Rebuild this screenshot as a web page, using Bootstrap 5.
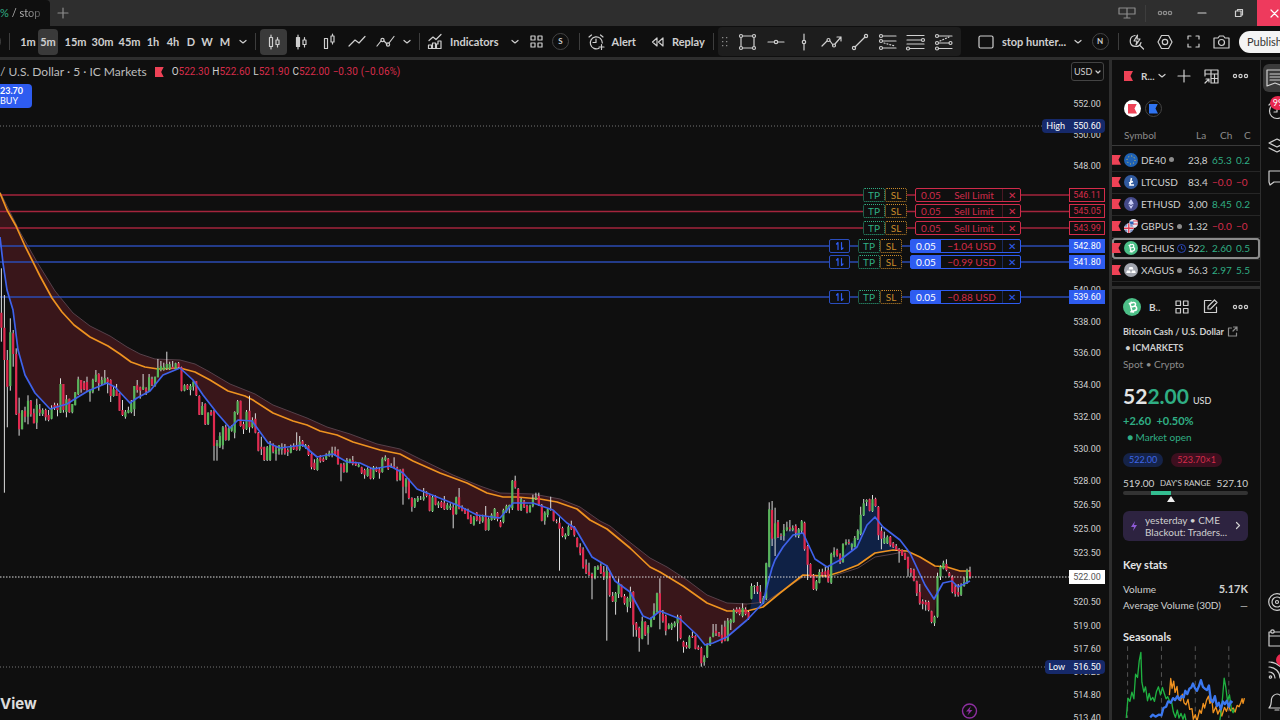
<!DOCTYPE html>
<html lang="en" data-bs-theme="dark">
<head>
<meta charset="utf-8">
<meta name="viewport" content="width=device-width, initial-scale=1">
<title>BCHUSD chart</title>
<link href="https://cdn.jsdelivr.net/npm/bootstrap@5.3.0/dist/css/bootstrap.min.css" rel="stylesheet">
<style>
:root{--bg:#0f0f0f;--line:#2e2e2e;--txt:#cfcfcf;--up:#2fae84;--down:#d62c4a;--blue:#2e5cf0;--gold:#c98a2b}
body{background:var(--bg);color:var(--txt);font:11px/16px Lato,"Noto Sans",sans-serif;overflow:hidden}
button,select{font:inherit;color:inherit;background:none;border:0;padding:0}
svg{display:block;overflow:visible}
.ico{fill:none;stroke:currentColor;stroke-width:1.2;stroke-linecap:round;stroke-linejoin:round}
.up{color:var(--up)}.down{color:var(--down)}.dim{color:#8c8c8c}
.titlebar{height:26px;background:#2e2e2e}
.tabitem{width:50px;background:var(--bg);white-space:nowrap;overflow:hidden;border-radius:0 4px 0 0}
.fade-text{background:linear-gradient(90deg,#bbb 40%,#555);-webkit-background-clip:text;background-clip:text;color:transparent}
.win{width:37px}.win-close{width:23px;padding-left:14px;background:#ee3a5d;color:#fff}
.tools{height:34px;border-bottom:3px solid var(--line)}
.tools button{height:26px;display:flex;align-items:center;justify-content:center;flex:none;border-radius:4px}
.b16{width:16px}.b20{width:20px}.b27{width:27px}.b28{width:28px}
.tools .active{background:#3a3a3a}
.vsep{width:1px;height:17px;background:#3d3d3d;flex:none}
.round{width:17px;height:17px;border:1px solid #444;border-radius:50%;font-size:8px;line-height:15px;text-align:center;font-weight:700}
.clipped-start{margin-left:-16px}
.drawbar{background:#1d1d1d;height:29px;border-radius:4px;width:243px}
.tools .publish{background:#f4f4f4;color:#333;border-radius:11px 0 0 11px;height:22px;width:41px;justify-content:flex-start;padding-left:8px}
.legend{left:0;top:4px;white-space:nowrap}
.legend .nm{font-size:12px;color:#bdbdbd}
.legend .ohlc{font-family:Roboto,sans-serif;font-size:10px;gap:3px}
.buy{left:0;top:24px;width:32px;height:24px;background:var(--blue)!important;color:#fff;border-radius:0 4px 4px 0;font-size:9px;line-height:10px;text-align:left}
.ccy{right:5px;top:2px;width:33px;height:19px;border:1px solid #444!important;border-radius:3px;font-size:9px;padding-left:2px!important;appearance:none;-webkit-appearance:none}
.ccychev{right:8px;top:9px;pointer-events:none}
.overlay{position:absolute;right:4px;transform:translateY(-50%);height:14px;font-size:10px;line-height:14px;white-space:nowrap}
.axis{width:36px;text-align:center;font-family:Roboto,sans-serif;font-size:9px}
.tag-line{background:var(--bg);border:1px solid var(--down);color:var(--down);line-height:12px}
.tag-blue{background:var(--blue);color:#fff}.tag-white{background:#fff;color:#555}.tag-navy{background:#16296a;color:#fff;font-size:9px}
.tpsl{width:22px;text-align:center;background:var(--bg);border:1px dotted;border-radius:2px;line-height:12px}
.obox{background:var(--bg);border:1px solid;border-radius:2px;line-height:12px;margin:0 48px 0 8px;display:flex;text-align:center}
.obox .q{width:30px}.obox .x{width:18px;line-height:12px}
.sell .obox{width:106px;color:#d02b4b}.hold .obox{width:111px;color:var(--blue)}
.sell .x{border-left:1px solid #4a1824}.hold .x{border-left:1px solid #1b2a5c}
.hold .q{background:var(--blue);color:#fff}
.swap{width:21px;margin-right:8px;border:1px solid #2a4dbd!important;border-radius:2px;color:var(--blue);background:var(--bg)!important;display:flex;align-items:center;justify-content:center}
.brand{left:0;bottom:6px;font:700 15px/20px Inter,sans-serif;color:#dcdcdc}
.side{width:152px;border-left:3px solid var(--line);border-right:1px solid var(--line);font-size:10px}
.rail{width:19px;overflow:hidden}
.rail button{width:30px;height:28px;padding-left:3px;display:block}
.flag{display:inline-block;width:9px;height:10px;background:#ee4256;clip-path:polygon(0 0,100% 0,72% 50%,100% 100%,0 100%)}
.flag.b{background:#2f73f0}
.disc{width:17px;height:17px;border-radius:50%;display:flex;align-items:center;justify-content:center}
.ring{border:1px solid #444!important}
.wl{table-layout:fixed;width:100%;font-size:10px;line-height:16px}
.wl td,.wl th{padding:0;font-weight:400;white-space:nowrap;overflow:hidden;height:22px;border-bottom:1px solid #262626}
.wl th{height:20px;color:#8c8c8c;border-color:#3a3a3a}
.wl .sel td{box-shadow:inset 0 2px #8b8b8b,inset 0 -2px #8b8b8b}
.wl .sel td:first-child{box-shadow:inset 2px 0 #8b8b8b,inset 0 2px #8b8b8b,inset 0 -2px #8b8b8b;border-radius:4px 0 0 4px}
.wl .sel td:last-child{box-shadow:inset -2px 0 #8b8b8b,inset 0 2px #8b8b8b,inset 0 -2px #8b8b8b;border-radius:0 4px 4px 0}
.clip{display:block;overflow:hidden}
.symrow{gap:3px}
.coin{width:14px;height:14px;flex:none}
.sq{width:5px;height:5px;border-radius:50%;background:#8c8c8c;flex:none}
.detail{border-top:3px solid var(--line);padding:9px 12px 0 11px}
.desc{font-size:9px}
.big{font-size:21px;line-height:24px;font-weight:700;color:#e4e4e4}
.pill{border-radius:8px;padding:0 6px;line-height:14px;font-size:9px}
.track{height:4px;background:#333;border-radius:2px}
.news{background:#2d2340;border-radius:6px;height:30px;line-height:12px}
a{color:inherit;text-decoration:none}
h2{font-size:11px;line-height:16px;font-weight:700;margin:0;color:#e4e4e4}
</style>
</head>
<body class="vh-100 d-flex flex-column">
<header class="titlebar d-flex align-items-stretch flex-shrink-0">
  <div class="tabitem d-flex align-items-center"><span class="up">%</span>&nbsp;<span class="fade-text">/ stop</span></div>
  <button class="px-2" aria-label="New tab"><svg class="ico dim" width="10" height="10"><path d="M5 0v10M0 5h10"/></svg></button>
  <div class="ms-auto d-flex align-items-stretch">
    <button class="win d-flex align-items-center justify-content-center" aria-label="Layouts"><svg class="ico dim" width="18" height="12"><path d="M1 1h16v6H1zM9 1v10M6 11h6"/></svg></button>
    <span class="vsep align-self-center"></span>
    <button class="win d-flex align-items-center justify-content-center" aria-label="More"><svg class="ico dim" width="16" height="6"><circle cx="3" cy="3" r="1.700"/><circle cx="8" cy="3" r="1.700"/><circle cx="13" cy="3" r="1.700"/></svg></button>
    <button class="win d-flex align-items-center justify-content-center" aria-label="Minimize"><svg class="ico" width="8" height="2"><path d="M0 1h8"/></svg></button>
    <button class="win d-flex align-items-center justify-content-center" aria-label="Restore"><svg class="ico" width="8" height="8"><path d="M.5 2h5.500v5.500H.5zM2.500 2V.5h5V6H6"/></svg></button>
    <button class="win-close d-flex align-items-center" aria-label="Close"><svg class="ico" width="7" height="7"><path d="M0 0l7 7M7 0L0 7"/></svg></button>
  </div>
</header>

<nav class="tools d-flex align-items-center flex-shrink-0 overflow-hidden">
  <span class="round flex-shrink-0 clipped-start"></span>
  <span class="vsep ms-2 me-1"></span>
  <div class="d-flex ms-1 me-1 text-nowrap fw-bold">
    <button class="b20">1m</button><button class="b20 active me-1">5m</button><button class="b27">15m</button><button class="b27">30m</button><button class="b27">45m</button><button class="b20">1h</button><button class="b20">4h</button><button class="b16">D</button><button class="b16">W</button><button class="b20">M</button>
    <button class="b16" aria-label="Intervals"><svg class="ico" width="6" height="4"><path d="M0 .5l3 2.500 3-2.500"/></svg></button>
  </div>
  <span class="vsep me-1"></span>
  <div class="d-flex">
    <button class="b27 active" aria-label="Hollow candles"><svg class="ico" width="12" height="16"><path d="M1.500 3.500h3v9h-3zM3 1v2.500M3 12.500V15M8 6h3v4.500H8zM9.500 3.500V6M9.500 10.500V13"/></svg></button>
    <button class="b28" aria-label="Candles"><svg class="ico" width="12" height="16"><path fill="currentColor" d="M1.500 3.500h3v9h-3z"/><path d="M3 1v2.500M3 12.500V15M8 6h3v4.500H8zM9.500 3.500V6M9.500 10.500V13"/></svg></button>
    <button class="b28" aria-label="Hollow"><svg class="ico" width="12" height="16"><path d="M1.500 4.500h3v10h-3zM8 2h3v6H8zM9.500 0v2M9.500 8v2"/></svg></button>
    <button class="b28" aria-label="Line"><svg class="ico" width="16" height="12"><path d="M0 10l6-6 4 3 6-6.500"/></svg></button>
    <button class="b28" aria-label="Markers"><svg class="ico" width="17" height="12"><path d="M0 10l4-5M7 5l3 3M12 7l5-6.500"/><circle cx="5.500" cy="4" r="1.600"/><circle cx="11" cy="8.500" r="1.600"/></svg></button>
    <button class="b16" aria-label="Chart types"><svg class="ico" width="6" height="4"><path d="M0 .5l3 2.500 3-2.500"/></svg></button>
  </div>
  <span class="vsep ms-1 me-2"></span>
  <button class="gap-1 pe-2 fw-bold"><svg class="ico me-1" width="14" height="15"><path d="M.5 14.500V11h3v3.500zM4.500 14.500V9h3v5.500zM8.500 14.500V10h1.500V7h3v7.500zM1 6.500l4-3.500 3 2.500 5-5"/></svg>Indicators</button>
  <button class="b16" aria-label="Favorites"><svg class="ico" width="6" height="4"><path d="M0 .5l3 2.500 3-2.500"/></svg></button>
  <button class="b28" aria-label="Templates"><svg class="ico" width="13" height="13"><path d="M1 1h4v4H1zM8 1h4v4H8zM1 8h4v4H1zM8 8h4v4H8z"/></svg></button>
  <button class="b20"><span class="round">S</span></button>
  <span class="vsep ms-2 me-2"></span>
  <button class="gap-1 pe-3 fw-bold"><svg class="ico me-1" width="16" height="16"><path d="M11 14.200A6 6 0 1 1 14.300 9M8 5v3.500H5M1 3l2.500-2M15 3l-2.500-2M13.500 10.500v5M11 13h5"/></svg>Alert</button>
  <button class="gap-2 fw-bold"><svg class="ico" width="12" height="10"><path d="M5 1v8L.5 5zM11 1v8L6.500 5z"/></svg>Replay</button>
  <span class="vsep ms-2 me-1"></span>
  <div class="drawbar d-flex align-items-center flex-shrink-0">
    <span class="b16 ps-1 dim"><svg width="7" height="10" fill="currentColor"><path d="M0 0h1.300v1.300H0zM4 0h1.300v1.300H4zM0 4h1.300v1.300H0zM4 4h1.300v1.300H4zM0 8h1.300v1.300H0zM4 8h1.300v1.300H4z"/></svg></span>
    <button class="b28" aria-label="Rectangle"><svg class="ico" width="17" height="16"><path d="M4 2h9M4 14h9M2 4v8M15 4v8"/><circle cx="2" cy="2" r="1.500"/><circle cx="15" cy="2" r="1.500"/><circle cx="2" cy="14" r="1.500"/><circle cx="15" cy="14" r="1.500"/></svg></button>
    <button class="b28" aria-label="Horizontal line"><svg class="ico" width="16" height="6"><path d="M0 3h6M10 3h6"/><circle cx="8" cy="3" r="1.700"/></svg></button>
    <button class="b28" aria-label="Vertical line"><svg class="ico" width="6" height="16"><path d="M3 0v6M3 10v6"/><circle cx="3" cy="8" r="1.700"/></svg></button>
    <button class="b28" aria-label="Path"><svg class="ico" width="20" height="12"><path d="M0 10l5-5M8 5l3 4M13 8l6-7M15 1h4v4"/><circle cx="6.500" cy="4" r="1.500"/><circle cx="12" cy="9.500" r="1.500"/></svg></button>
    <button class="b28" aria-label="Trend line"><svg class="ico" width="16" height="16"><path d="M3 13L13 3"/><circle cx="2" cy="14" r="1.600"/><circle cx="14" cy="2" r="1.600"/></svg></button>
    <button class="b28" aria-label="Long position"><svg class="ico" width="18" height="16"><path d="M4 2h13M4 7h13M4 14h13"/><path d="M5 9l11 3" stroke-dasharray="1 2"/><circle cx="2" cy="2" r="1.500"/><circle cx="2" cy="7" r="1.500"/><circle cx="2" cy="14" r="1.500"/></svg></button>
    <button class="b28" aria-label="Fib retracement"><svg class="ico" width="20" height="16"><path d="M1 1.500h17M1 6h14M1 10h17M4 14.500h14"/><circle cx="17" cy="6" r="1.500"/><circle cx="2" cy="14.500" r="1.500"/></svg></button>
    <button class="b28" aria-label="Short position"><svg class="ico" width="18" height="16"><path d="M4 2h13M4 9h10M4 14.500h13"/><path d="M5 7l9-4" stroke-dasharray="1 2"/><circle cx="2" cy="2" r="1.500"/><circle cx="2" cy="9" r="1.500"/><circle cx="2" cy="14.500" r="1.500"/><circle cx="15.500" cy="9" r="1.500"/></svg></button>
  </div>
  <div class="d-flex align-items-center ms-auto flex-shrink-0">
    <button class="gap-2 pe-1 fw-bold"><svg class="ico" width="16" height="14"><rect x="1" y="1" width="14" height="12" rx="1.500"/></svg>stop hunter...</button>
    <button class="b16" aria-label="Layouts"><svg class="ico" width="6" height="4"><path d="M0 .5l3 2.500 3-2.500"/></svg></button>
    <button class="b20 ms-1"><span class="round">N</span></button>
    <span class="vsep ms-2 me-1"></span>
    <button class="b28" aria-label="Quick search"><svg class="ico" width="16" height="16"><path d="M6 1.500a5.500 5.500 0 1 0 6 7M10.500 11l4 4M8.500 1L5 7h3l-1 4 4-6H8z"/></svg></button>
    <button class="b28" aria-label="Settings"><svg class="ico" width="16" height="16"><path d="M4.500 1.500h7L15 8l-3.500 6.500h-7L1 8z"/><circle cx="8" cy="8" r="2.700"/></svg></button>
    <button class="b28" aria-label="Fullscreen"><svg class="ico" width="13" height="13"><path d="M1 4V1h3M9 1h3v3M12 9v3H9M4 12H1V9"/></svg></button>
    <button class="b28" aria-label="Snapshot"><svg class="ico" width="17" height="14"><path d="M1 3h4l1.500-2h4L12 3h4v10H1z"/><circle cx="8.500" cy="7.500" r="3"/></svg></button>
    <button class="publish ms-1">Publish</button>
  </div>
</nav>

<main class="d-flex flex-grow-1 overflow-hidden">
  <section class="position-relative flex-grow-1 overflow-hidden" id="stage">
    <svg id="plot" class="w-100 h-100" viewBox="0 60 1109 660" preserveAspectRatio="none" role="img" aria-label="BCHUSD candles"></svg>
    <div class="legend position-absolute d-flex align-items-center">
      <span class="nm">/ U.S. Dollar · 5 · IC Markets</span><i class="flag mx-2"></i>
      <span class="ohlc d-flex"><span>O<b class="fw-normal down">522.30</b></span><span>H<b class="fw-normal down">522.60</b></span><span>L<b class="fw-normal down">521.90</b></span><span>C<b class="fw-normal down">522.00</b></span><span class="down">−0.30</span><span class="down">(−0.06%)</span></span>
    </div>
    <button class="buy position-absolute"><b>23.70</b><br>BUY</button>
    <select class="ccy position-absolute" aria-label="Currency"><option>USD</option></select>
    <svg class="ico ccychev position-absolute" width="6" height="6"><path d="M1 2l2 2 2-2"/></svg>
    <div id="labels"></div>
    <div class="brand position-absolute">View</div>
  </section>

  <aside class="side d-flex flex-column flex-shrink-0 overflow-hidden">
    <div class="d-flex align-items-center justify-content-between pt-2 ps-2 pe-2 ms-1 me-1">
      <button class="d-flex align-items-center gap-1"><i class="flag"></i><b class="ms-1">R...</b><svg class="ico" width="6" height="4"><path d="M0 .5l3 2.500 3-2.500"/></svg></button>
      <button aria-label="Add symbol"><svg class="ico" width="12" height="12"><path d="M6 0v12M0 6h12"/></svg></button>
      <button aria-label="Table view"><svg class="ico" width="15" height="15"><path d="M1 7V1h13v13H7M1 5h13M7 1v13M10.500 5v9M7 9.500h7M1 14l4-4M2 10h3v3"/></svg></button>
      <button aria-label="More"><svg class="ico" width="15" height="6"><circle cx="2" cy="3" r="1.600"/><circle cx="7.500" cy="3" r="1.600"/><circle cx="13" cy="3" r="1.600"/></svg></button>
    </div>
    <div class="d-flex gap-1 ps-2 pt-3 pb-1 ms-1"><button class="disc bg-white" aria-label="Red list"><i class="flag"></i></button><button class="disc ring" aria-label="Blue list"><i class="flag b"></i></button></div>
    <table class="wl mt-1"><colgroup><col style="width:76px"><col style="width:24px"><col style="width:24px"><col></colgroup>
      <thead><tr><th class="ps-2"><span class="ms-1">Symbol</span></th><th><span class="clip ms-2">La</span></th><th><span class="clip ms-2">Ch</span></th><th><span class="ms-2">C</span></th></tr><tr><td colspan="4" style="height:4px;border:0"></td></tr></thead>
      <tbody id="rows"></tbody>
    </table>
    <div class="detail mt-1">
      <div class="d-flex align-items-center justify-content-between">
        <span class="d-flex align-items-center gap-1"><svg width="18" height="18" viewBox="0 0 14 14"><use href="#c-bch"/></svg><b class="ms-1">B..</b></span>
        <button aria-label="Widgets"><svg class="ico" width="14" height="14"><path d="M1 1h4.500v4.500H1zM8.500 1H13v4.500H8.500zM1 8.500h4.500V13H1zM8.500 8.500H13V13H8.500z"/></svg></button>
        <button aria-label="Notes"><svg class="ico" width="15" height="15"><path d="M8 1.500H1.500v12h12V8M5 10V7.500L11.500 1 14 3.500 7.500 10z"/></svg></button>
        <button aria-label="More"><svg class="ico" width="15" height="6"><circle cx="2" cy="3" r="1.600"/><circle cx="7.500" cy="3" r="1.600"/><circle cx="13" cy="3" r="1.600"/></svg></button>
      </div>
      <div class="desc fw-bold d-flex align-items-center gap-1 mt-2 text-nowrap"><a href="#">Bitcoin Cash / U.S. Dollar</a><svg class="ico dim" width="9" height="9"><path d="M3.500 1H.5v8h8V6M5.500 0H9v3.500M9 0L5 4"/></svg></div>
      <div class="desc fw-bold">&nbsp;• ICMARKETS</div>
      <div class="dim">Spot • Crypto</div>
      <div class="big pt-2 mt-1">52<span class="up">2.00</span><small class="fw-normal ms-1" style="font-size:9px">USD</small></div>
      <div class="up fw-bold" style="font-size:11px">+2.60&nbsp; +0.50%</div>
      <div class="up ms-1">● Market open</div>
      <div class="d-flex gap-2 mt-2"><span class="pill" style="background:#152348;color:#3e66e6">522.00</span><span class="pill" style="background:#3d0f1f;color:#d62c4a">523.70×1</span></div>
      <div class="d-flex justify-content-between mt-2"><span>519.00</span><span style="font-size:8px">DAY'S RANGE</span><span>527.10</span></div>
      <div class="track d-flex"><i class="h-100" style="background:#33bd90;margin-left:22%;width:16%"></i></div>
      <svg class="w-100" height="8" viewBox="0 0 125 8"><path d="M48 1l4 6h-8z" fill="#eee"/></svg>
      <button class="news d-flex align-items-center w-100 text-start px-2 mt-2 text-nowrap"><svg width="6" height="10"><path d="M4 0L0 6h3L2 10l4-6H3z" fill="#8e5bd6"/></svg><span class="ms-2 flex-grow-1">yesterday • CME<br>Blackout: Traders...</span><svg class="ico" width="4" height="7"><path d="M.5.5l3 3-3 3"/></svg></button>
      <h2 class="mt-3">Key stats</h2>
      <div class="d-flex justify-content-between mt-2"><span>Volume</span><b style="font-size:11px">5.17K</b></div>
      <div class="d-flex justify-content-between"><span>Average Volume (30D)</span><span>—</span></div>
      <h2 class="mt-3">Seasonals</h2>
      <svg class="w-100" viewBox="249 474 375 220" height="73" id="seasons" fill="none" stroke-width="4" stroke-linejoin="round">
        <path d="M262 478v216M364 478v216M466 478v216M567 478v216" stroke="#555" stroke-dasharray="14 12" stroke-width="3"/>
        <path stroke="#f0921f" d="M388 625l4-50 4 30 5-22 4 34 6-18 4 38 7 5 5-20 5 26 6 6 6-16 5 30 7-2 4 32 6-14 5 20 8-34 5 10 6-30 4 14 6-24 6-12 4 22 6-12 4 40 8-18 6 22 6-14 6 20 8-26 6 12 6-18 6 16 8-8 6 12 6-20 6 4 5-12 4-12 3 14 4-16"/>
        <path stroke="#1fb141" d="M258 694l5-60 6 10 6-28 6 20 5-74 6 10 5-50 5-26 3 90 6 30 5-16 6 42 5-22 5 20 6-8 5 12 6-30 6-14 6 24 6-22 5 16 6 18 5-6 6 14 6 4 5 28 6 16 6-22 5 24 6-14 6 18 5-16 6 30 8-4 6 20 10-10 6 24 10-8 8 14 10-20 8 8 8-14 10 6 6-26 8 12 6-40 4-40 5-60 5 28 5 40 6-18 6 44 5 10 4-12"/>
        <path stroke="#3b78f0" stroke-width="7" d="M330 692l8-8 8 6 10-6 8 2 6-22 8-4 6-16 8 4 7-14 6 6 7-12 6 10 6-10 7 4 5-20 6 10 6-16 6-4 5-12 6 14 6 8 6-14 6-18 6 20 6 6 6 4 6-14 6 44 6 6 6-18 6 30 6-10 6 20 6-24 6 8 6-10 6 18 6-16 5 4"/>
      </svg>
    </div>
  </aside>

  <nav class="rail d-flex flex-column flex-shrink-0">
    <button class="rounded mt-1" style="background:#3a3a3a;margin-left:2px" aria-label="Watchlist"><svg class="ico" width="18" height="18"><path d="M1 1h16v16l-8-3-8 3zM4 5h10M4 8h10M4 11h10"/></svg></button>
    <button class="mt-1 ms-1 position-relative" aria-label="Alerts"><svg class="ico" width="18" height="18"><circle cx="9" cy="10" r="7.500"/><path d="M9 6v5H6M1 4l3-3"/></svg><span class="position-absolute text-white rounded-circle text-center" style="background:#e8284e;left:5px;top:0;width:16px;height:14px;font-size:9px;line-height:14px">99</span></button>
    <button class="mt-2 ms-1" aria-label="Layers"><svg class="ico" width="18" height="16"><path d="M1 5l8-4 8 4-8 4zM1 10l8 4 8-4"/></svg></button>
    <button class="mt-1 ms-1" aria-label="Chat"><svg class="ico" width="18" height="16"><path d="M1 1h16v11H6l-4 3-1-3z"/></svg></button>
    <span class="flex-grow-1"></span>
    <button class="ms-1" aria-label="Screeners"><svg class="ico" width="18" height="18"><circle cx="9" cy="9" r="8.300"/><circle cx="9" cy="9" r="5"/><circle cx="9" cy="9" r="1.500"/></svg></button>
    <button class="mt-2 ms-1" aria-label="Calendar"><svg class="ico" width="18" height="18"><path d="M1 3h16v14H1zM1 7h16"/><circle cx="4.500" cy="2.500" r="1.700" fill="#0f0f0f"/></svg></button>
    <button class="mt-1 ms-1 position-relative" aria-label="Feed"><svg class="ico" width="18" height="18"><path d="M1 1a16 16 0 0 1 16 16M1 6a11 11 0 0 1 11 11M1 11a6 6 0 0 1 6 6"/><circle cx="2.500" cy="16" r="1.200"/></svg><span class="position-absolute rounded-circle" style="background:#e8284e;left:11px;top:-2px;width:12px;height:12px"></span></button>
    <button class="mt-1 ms-1 mb-1" aria-label="Notifications"><svg class="ico" width="18" height="20"><path d="M1 16c3-3 2-6 2.500-9S7 2 9 2s5 2 5.500 5-.5 6 2.500 9zM7 18h4"/></svg></button>
  </nav>
</main>

<svg width="0" height="0" class="position-absolute"><defs>
  <g id="c-de"><circle cx="7" cy="7" r="7" fill="#1f62b5"/><circle cx="7" cy="7" r="4" fill="none" stroke="#e9c94a" stroke-dasharray="1 2.100"/></g>
  <g id="c-ltc"><circle cx="7" cy="7" r="7" fill="#315a9e"/><path d="M7.500 3L6 10h4M5 8l4-1.500" stroke="#fff" stroke-width="1.500" fill="none"/></g>
  <g id="c-eth"><circle cx="7" cy="7" r="7" fill="#454a8a"/><path d="M7 2l3 5-3 5-3-5z" fill="#c9cdf5"/><path d="M4 7l3 1.500L10 7" stroke="#454a8a" fill="none"/></g>
  <g id="c-gbp"><circle cx="9.500" cy="4.500" r="4.500" fill="#e9e9f2"/><path d="M9 2h5M9 5h5" stroke="#e03a4f"/><path d="M5.500 2.500h4v3h-4z" fill="#2c62b8"/><circle cx="4.800" cy="9.200" r="4.800" fill="#7d8fc0"/><path d="M4.800 4.500v9.400M0 9.200h9.600" stroke="#fff" stroke-width="2.800"/><path d="M4.800 4.500v9.400M0 9.200h9.600" stroke="#e03a4f" stroke-width="1.400"/></g>
  <g id="c-bch"><circle cx="7" cy="7" r="7" fill="#4cbf87"/><path d="M4.500 4.500l3.500-1c2-.4 2.500 2.300.6 3 2.400-.4 2.700 2.700.6 3.300l-3.500 1M5.500 4.300l1.500 6.200M6 7.200l2.600-.7M6.300 2.800l.3 1.200M7.800 10.200l.4 1.300" stroke="#fff" fill="none" stroke-width="1.200"/></g>
  <g id="c-xag"><circle cx="7" cy="7" r="7" fill="#a3a6af"/><path d="M5.500 4h3l1 2.500h-5zM3 7.500h3l.8 2.500H2.200zM8 7.500h3l.8 2.500H7.200z" fill="#fff"/></g>
</defs></svg>

<script src="https://cdn.jsdelivr.net/npm/bootstrap@5.3.0/dist/js/bootstrap.bundle.min.js"></script>
<script>
// Candles, as open,close,high,low, in thirds of a pixel below each block's base line.
const blocks = [
 [180,`398,443,265,485 443,540,345,938 540,620,510,742 618,457,415,632 460,522,450,560 522,703,505,705 700,748,653,767 748,692,690,748 692,710,680,727 710,662,646,733 662,703,660,710 700,730,686,730 728,675,656,747 688,698,672,708 702,690,685,708 690,712,686,722 705,720,690,724 716,684,676,718 675,684,668,690 676,690,670,709 698,612,595,699 612,690,612,698 696,658,645,712 656,697,656,698 697,672,672,700 676,637,636,676 642,598,590,645 600,628,600,638 608,628,603,630 606,630,590,632 640,630,628,665 635,600,596,640 602,584,570,606 582,610,580,632 612,600,590,616 610,594,570,612 596,606,592,640 600,648,598,666 648,628,618,650 630,648,612,648 640,692,640,692 690,705,660,708 710,695,690,716 698,690,680,700 696,670,660,700 688,618,618,708 616,630,600,638 622,632,620,656 628,620,582,630 625,634,622,645 634,592,582,636 597,614,590,618 618,590,590,620 592,563,537,592 570,558,543,574 570,560,548,572 566,552,515,570 568,552,545,570 560,566,543,567 568,550,548,570 550,562,546,566 562,632,560,634 632,616,613,634 614,628,612,630 630,618,612,646 620,605,600,632 604,646,604,648 648,704,646,705 704,678,666,705 672,733,670,735 732,698,697,735 696,704,690,707 692,798,690,842 798,790,780,842 800,768,757,804 796,742,738,808 742,780,734,782 780,745,742,782 752,738,736,755 758,696,694,775 700,664,660,704 662,738,662,740`],
 [380,`132,148,125,162 148,95,90,150 92,142,47,158 142,120,112,145 116,158,100,160 158,212,156,214 200,208,170,225 202,240,200,243 240,202,198,243 240,195,183,243 196,215,190,220 222,210,200,242 212,196,196,224 210,200,190,224 204,220,192,224 210,216,205,228 218,200,194,220 200,208,190,210 196,210,157,212 208,185,168,212 184,198,180,200 200,196,192,206 198,225,196,228 222,262,220,268 248,268,238,270 270,236,233,272 232,244,226,248 236,244,232,246 236,224,220,240 228,218,212,230 218,212,200,232 212,222,200,228 212,252,208,254 252,262,250,304 254,276,248,278 276,240,234,278 246,238,236,250 240,252,228,256 248,256,245,258 260,254,250,262 262,278,260,282 270,284,266,296 288,266,262,290 266,296,262,298 294,262,258,298 264,274,260,276 268,280,262,296 276,236,232,278 240,232,226,244 236,266,234,270 262,258,250,264 258,262,232,264 264,300,260,304 300,270,268,302 268,320,266,374 320,298,294,340 298,354,296,358 354,380,352,395 380,358,354,384 362,354,348,366 358,356,348,360 358,350,324,362 340,348,334,352 346,392,344,394 394,352,348,396 350,374,346,376 376,368,364,384 366,382,362,384 368,388,348,390 388,374,368,390 384,378,370,390 382,404,370,445 402,352,350,404 352,386,324,388 384,392,376,394 388,400,384,402 392,416,386,418 410,430,404,432 434,412,408,437 398,420,396,424 412,424,408,432 424,410,404,428 410,450,378,452 450,416,412,452 420,404,400,422 418,386,384,420 398,418,396,424`],
 [460,`185,200,180,202 186,150,146,190 155,138,134,158 145,135,134,160 145,62,60,150 62,82,47,86 86,150,84,152 150,118,114,153 124,140,120,144 138,156,134,160 155,138,134,158 138,116,104,142 116,112,98,120 108,135,98,138 135,182,132,184 182,158,154,194 165,148,144,172 150,146,110,152 152,182,150,184 184,186,178,190 188,206,172,332 204,228,200,232 232,224,220,238 226,200,196,228 196,208,182,210 200,226,198,230 234,260,232,262 260,280,250,286 268,322,262,326 314,338,298,342 335,345,308,348 342,355,338,418 354,322,318,358 328,320,316,330 318,340,310,342 336,350,318,360 356,332,316,542 336,406,332,410 408,424,396,426 426,400,396,464 402,370,355,414 374,410,374,412 408,430,402,434 440,414,410,457 425,396,380,444 396,494,394,530 490,510,486,530 504,534,500,575 536,484,470,538 486,524,484,528 520,500,495,554 500,476,472,502 478,454,430,480 456,400,398,458 400,462,355,508 462,484,450,488 468,512,464,526 506,496,490,508 505,492,488,510 498,488,484,502 490,470,464,544 468,535,466,538 545,560,542,578 556,562,546,566 564,530,526,566 528,532,514,534 528,566,526,568 562,568,556,570 564,610,560,620 606,592,586,617 592,554,550,594 556,534,530,558 530,518,492,532 512,520,492,528 520,528,516,530 524,546,494,550 500,542,482,544 542,482,474,544 490,480,476,510 486,450,446,488 448,456,442,460 446,462,442,466 468,444,430,472 448,462,442,466 456,478,452,480`],
 [470,`386,348,340,388 350,348,345,372 348,365,336,372 365,395,345,400 400,384,378,402 385,280,278,390 290,118,97,292 120,206,93,228 206,160,113,258 156,202,150,204 196,198,190,210 198,180,162,212 180,172,155,184 172,178,150,184 180,174,166,184 168,188,163,202 198,178,174,204 182,154,150,192 158,238,155,242 228,284,225,330 282,320,280,322 316,358,312,360 358,334,330,362 338,306,298,340 306,316,296,320 304,314,290,320 300,335,290,338 338,252,248,342 256,244,232,262 240,256,236,260 254,276,250,282 276,222,220,278 222,216,208,226 216,220,208,224 232,222,220,240 230,204,198,232 208,182,178,210 192,134,110,196 136,100,87,138 96,90,88,108 88,122,86,124 124,88,75,126 86,108,83,110 110,196,108,210 182,206,170,238 220,204,185,222 220,200,196,222 200,226,198,230 220,232,216,234 228,240,222,242 238,244,234,278 240,256,238,258 250,266,248,270 262,296,260,320 298,308,294,320 300,332,296,334 334,370,332,378 366,400,342,404 394,402,388,418 396,404,390,422 396,420,392,424 424,456,422,460 460,440,437,468 440,318,308,443 320,290,286,330 296,278,272,298 282,300,268,304 310,318,306,320 320,366,316,370 350,372,345,380 366,376,342,380 374,348,340,378 348,336,322,350 340,300,296,342 305,320,290,326`]];
const slow='0,193 7,210 16,226 25,246 40,276 52,298 62,312 74,325 90,337 108,346 120,354 131,362 145,367 158,369 180,368 195,372 210,380 228,391 245,396 253,400 273,413 293,421 307,425 320,431 337,435 353,442 380,450 400,454 413,461 440,473 467,483 487,493 503,497 517,497 540,499 557,502 577,509 590,520 607,529 630,548 650,567 660,572 683,586 707,603 727,611 747,611 763,607 780,593 803,575 827,576 840,572 858,565 875,553 893,550 907,551 920,557 935,566 947,567 960,571 970,571';
const edge='0,192 20,232 37,262 55,291 73,313 90,326 110,336 127,347 140,354 155,359 180,360 195,364 208,371 230,384 240,388 255,394 273,405 307,418 327,427 350,434 377,444 400,449 420,459 453,475 480,486 500,493 533,494 560,499 580,507 600,521 610,526 627,540 650,558 667,567 687,580 707,595 727,603 747,604';
const fastA='0,237 3,263 7,290 13,310 18,350 25,375 35,393 50,409 67,404 78,397 88,391 107,383 115,387 130,403 137,398 150,391 163,375 180,368 193,380 203,395 217,413 230,428 238,420 252,421 268,443 280,448 303,445 317,457 333,454 347,462 360,463 373,469 390,466 403,473 417,489 437,497 457,505 477,515 500,518 513,503 533,503 553,510 567,523 575,528 592,557 607,566 615,581 630,592 643,616 650,619 660,611 680,619 697,635 705,645 713,643 727,637 747,620';
const fastB=' 763,603 768,583 772,568 775,560 783,547 793,535 803,533 815,559 827,567 840,560 857,547 867,525 875,517 883,527 900,540 910,553 925,585 934,599 943,583 952,581 958,587 970,581';
const rev=s=>s.split(' ').reverse().join(' ');
let g=`<polygon points="${edge} ${rev(fastA)}" fill="#39161a"/>
<polygon points="750,610 753,594 757,588 762,601 767,575 769,530 774,538 782,536 791,529 803,530 807,555 811,574 803,575 780,593 763,607" fill="#0f2145"/>
<polygon points="830,573 834,557 842,558 847,545 857,538 862,515 866,502 877,504 880,530 888,540 897,547 900,550 875,554 858,565 840,572" fill="#0f2145"/>
<polygon points="903,551 912,573 920,595 927,605 934,621 939,570 935,566 920,557" fill="#39161a"/>
<polygon points="944,567 951,580 958,592 968,571 960,571" fill="#39161a"/>
<path d="M0 126H1046M0 667H1046" stroke="#777" stroke-dasharray="1 2"/>
<polyline points="${edge} 765,602 803,577 830,577 858,568 875,557 893,554 907,551" fill="none" stroke="#55414a"/>`;
for(const y of [195,211.5,228]) g+=`<path d="M0 ${y}H1070" stroke="#a5253d" stroke-width="1.300"/>`;
for(const y of [246,262,297]) g+=`<path d="M0 ${y}H1070" stroke="#2b4bb3" stroke-width="1.300"/>`;
g+=`<polyline points="${slow}" fill="none" stroke="#ee9320" stroke-width="1.700" stroke-linejoin="round"/>`;
let i=0,wicks='',up='',dn='';
for(const [base,rows] of blocks) for(const r of rows.split(' ')){
  const [o,c,h,l]=r.split(',').map(v=>base+v/3), x=(1.4+2.953*i++).toFixed(1);
  wicks+=`M${x} ${h.toFixed(1)}V${l.toFixed(1)}`;
  const b=`M${x} ${Math.min(o,c).toFixed(1)}V${Math.max(o,c).toFixed(1)}`;
  if(c<o) up+=b; else dn+=b;
}
g+=`<path d="${wicks}" stroke="#dcdcdc"/><path d="${dn}" stroke="#e0294f" stroke-width="2.200"/><path d="${up}" stroke="#58b45a" stroke-width="2.200"/>
<polyline points="${fastA+fastB}" fill="none" stroke="#3f62ea" stroke-width="1.700" stroke-linejoin="round"/>
<path d="M0 577H1070" stroke="#ddd" stroke-dasharray="1.500 1.500"/>
<circle cx="969.500" cy="711" r="7" fill="none" stroke="#8d2fa0" stroke-width="1.400"/><path d="M971 706l-5 5.500h3l-1.500 4 5-5.500h-3z" fill="#8d2fa0"/>`;
document.getElementById('plot').innerHTML=g;

// Price scale and orders
const at=y=>`style="top:${((y-60)/6.6).toFixed(3)}%"`;
let h='';
for(const [y,t] of [[104,'552.00'],[135,'550.00'],[166,'548.00'],[290,'540.00'],[322,'538.00'],[353,'536.00'],[385,'534.00'],[417,'532.00'],[449,'530.00'],[481,'528.00'],[505,'526.50'],[529,'525.00'],[553,'523.50'],[602,'520.50'],[626,'519.00'],[649,'517.60'],[672,'516.20'],[695,'514.80'],[718,'513.40']])
  h+=`<div class="overlay axis" ${at(y)}>${t}</div>`;
for(const [y,n,t] of [[126,'High','550.60'],[667,'Low','516.50']])
  h+=`<div class="overlay d-flex tag-navy rounded-1" ${at(y)}><span class="px-1">${n}</span><span class="axis">${t}</span></div>`;
h+=`<div class="overlay axis tag-white" ${at(577)}>522.00</div>`;
for(const [y,p] of [[195,'546.11'],[211,'545.05'],[228,'543.99']])
  h+=`<div class="overlay d-flex sell" ${at(y)}><button class="tpsl up">TP</button><button class="tpsl" style="color:var(--gold)">SL</button><div class="obox"><span class="q">0.05</span><span class="flex-grow-1">Sell Limit</span><button class="x" aria-label="Cancel">✕</button></div><span class="axis tag-line">${p}</span></div>`;
for(const [y,v,p] of [[246,'−1.04','542.80'],[262,'−0.99','541.80'],[297,'−0.88','539.60']])
  h+=`<div class="overlay d-flex hold" ${at(y)}><button class="swap" aria-label="Reverse"><svg class="ico" width="8" height="8"><path d="M2 7.500V.5L.5 2M5.500.5v7L7 6"/></svg></button><button class="tpsl up">TP</button><button class="tpsl" style="color:var(--gold)">SL</button><div class="obox"><span class="q">0.05</span><span class="flex-grow-1 down">${v} USD</span><button class="x" aria-label="Close">✕</button></div><span class="axis tag-blue">${p}</span></div>`;
document.getElementById('labels').innerHTML=h;

// Watchlist
let w='';
for(const [ic,n,dot,last,ch,pc,cls] of [['de','DE40','sq','23,8','65.3','0.2','up'],['ltc','LTCUSD','','83.4','−0.0','−0','down'],['eth','ETHUSD','','3,00','8.45','0.2','up'],['gbp','GBPUSD','sq','1.32','−0.0','−0','down'],['bch','BCHUS','c','52<span class="up">2.</span>','2.60','0.5','up'],['xag','XAGUSD','sq','56.3','2.97','5.5','up']])
  w+=`<tr${ic=='bch'?' class="sel"':''}><td><span class="symrow d-flex align-items-center"><i class="flag flex-shrink-0"></i><svg class="coin" viewBox="0 0 14 14"><use href="#c-${ic}"/></svg><span class="clip" style="max-width:${dot?33:40}px">${n}</span>${dot=='sq'?'<i class="sq"></i>':dot?'<svg class="flex-shrink-0" width="9" height="9" fill="none" stroke="#2846b8"><circle cx="4.500" cy="4.500" r="4"/><path d="M4.500 2v3h2"/></svg>':''}</span></td><td><span class="clip" style="width:20px">${last}</span></td><td class="${cls}"><span class="clip" style="width:20px">${ch}</span></td><td class="${cls}"><span class="clip" style="width:14px">${pc}</span></td></tr>`;
document.getElementById('rows').innerHTML=w;
</script>
</body>
</html>
